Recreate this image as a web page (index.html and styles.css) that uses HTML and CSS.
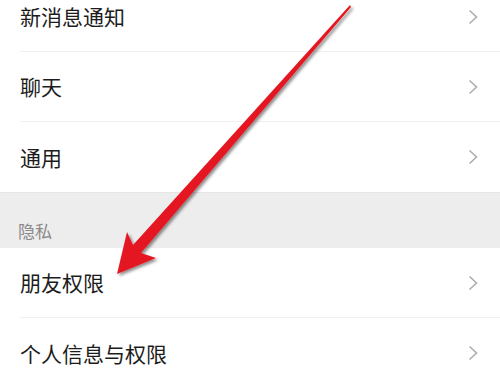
FILE: index.html
```html
<!DOCTYPE html>
<html lang="zh">
<head>
<meta charset="utf-8">
<link rel="stylesheet" href="styles.css">
</head>
<body>
<div class="page">
  <div class="group first">
    <div class="row"><span class="label">新消息通知</span><svg class="chev" viewBox="0 0 10 16"><path d="M1.5 1.5 L8.5 8 L1.5 14.5"/></svg></div>
    <div class="row"><span class="label">聊天</span><svg class="chev" viewBox="0 0 10 16"><path d="M1.5 1.5 L8.5 8 L1.5 14.5"/></svg></div>
    <div class="row last"><span class="label">通用</span><svg class="chev" viewBox="0 0 10 16"><path d="M1.5 1.5 L8.5 8 L1.5 14.5"/></svg></div>
  </div>
  <div class="section">隐私</div>
  <div class="group">
    <div class="row"><span class="label">朋友权限</span><svg class="chev" viewBox="0 0 10 16"><path d="M1.5 1.5 L8.5 8 L1.5 14.5"/></svg></div>
    <div class="row last"><span class="label">个人信息与权限</span><svg class="chev" viewBox="0 0 10 16"><path d="M1.5 1.5 L8.5 8 L1.5 14.5"/></svg></div>
  </div>
  <svg class="arrow" viewBox="0 0 500 368" width="500" height="368">
    <defs>
      <filter id="sh" x="-20%" y="-20%" width="140%" height="140%">
        <feDropShadow dx="2" dy="2" stdDeviation="1.6" flood-color="#000" flood-opacity="0.45"/>
      </filter>
      <linearGradient id="rg" x1="0" y1="0" x2="1" y2="1">
        <stop offset="0" stop-color="#f02028"/>
        <stop offset="1" stop-color="#d8101a"/>
      </linearGradient>
    </defs>
    <polygon filter="url(#sh)" fill="url(#rg)" points="350,5 351,7 141,253 156,258 117,274 127,232 133,245"/>
  </svg>
</div>
</body>
</html>
```
FILE: styles.css
```css
html, body {
  margin: 0;
  padding: 0;
  background: #ffffff;
}
.page {
  position: relative;
  width: 500px;
  height: 368px;
  overflow: hidden;
  font-family: "Noto Sans CJK SC", "Noto Sans", sans-serif;
}
.group {
  background: #ffffff;
}
.group.first {
  margin-top: -18px;
}
.row {
  height: 70px;
  margin-left: 20px;
  padding-right: 22px;
  display: flex;
  align-items: center;
  justify-content: space-between;
  border-bottom: 1px solid #f0f0f0;
  box-sizing: border-box;
}
.row.last {
  border-bottom: none;
}
.label {
  font-size: 21px;
  color: #1c1c1c;
  line-height: 1;
}
.chev {
  width: 10px;
  height: 16px;
  fill: none;
  stroke: #adadad;
  stroke-width: 1.6;
}
.section {
  height: 56px;
  background: #ededed;
  border-top: 1px solid #e6e6e6;
  box-sizing: border-box;
  padding-left: 18px;
  display: flex;
  align-items: center;
  padding-top: 20px;
  font-size: 17px;
  color: #8a8a8a;
}
.arrow {
  position: absolute;
  left: 0;
  top: 0;
  pointer-events: none;
}
```
